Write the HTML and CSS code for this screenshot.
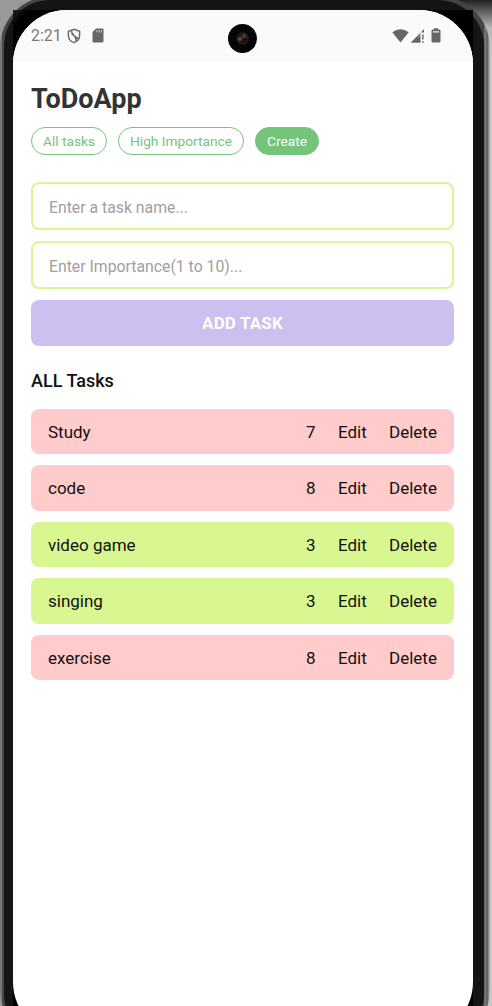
FILE: index.html
```html
<!DOCTYPE html>
<html lang="en">
<head>
<meta charset="utf-8">
<title>ToDoApp</title>
<link rel="stylesheet" href="styles.css">
</head>
<body>
<div class="phone">
<div class="bezel">
<div class="glass">
<div class="screen">
  <header class="status">
    <span class="time">2:21</span>
    <svg class="shield" width="14" height="16" viewBox="0 0 14 16" fill="none" stroke="#6c6c6c" stroke-width="1.5"><path d="M7 1.2 12.6 3.2V7.5C12.6 11 10.2 13.6 7 14.6 3.8 13.6 1.4 11 1.4 7.5V3.2ZM4.6 2.3C3.6 6.5 9.8 7.4 9.3 13.2M4.6 5.8 11.4 10.8"/></svg>
    <svg class="sd" width="12" height="15" viewBox="0 0 12 15"><path fill="#666" d="M4 .5H10.5Q11.5.5 11.5 1.5V13Q11.5 14.5 10 14.5H2Q.5 14.5.5 13V4Z"/><path stroke="#ccc" stroke-width="1" d="M5 2V4.5M7.2 2V4.5M9.4 2V4.5"/></svg>
    <span class="camera"></span>
    <svg class="wifi" width="17" height="14" viewBox="0 0 17 14"><path fill="#666" d="M.3 3.2Q8.5-2.8 16.7 3.2L8.5 13.6Z"/></svg>
    <svg class="signal" width="15" height="14" viewBox="0 0 15 14"><path fill="#666" d="M.5 13.7 14 .2V3.6H10.5V13.7ZM12.2 5.5H13.6V10.5H12.2ZM12.2 12H13.6V13.7H12.2Z"/><path fill="#fafafa" d="M7.5 8.5 12.8 3.2V4.5H10.3V6.5L8.3 8.5Z" opacity=".6"/></svg>
    <svg class="battery" width="10" height="15" viewBox="0 0 10 15"><path fill="#666" d="M3 .3H7V1.6H8.5Q9.5 1.6 9.5 2.6V13.5Q9.5 14.5 8.5 14.5H1.5Q.5 14.5.5 13.5V2.6Q.5 1.6 1.5 1.6H3Z"/><path fill="#eee" d="M2 3.2H8V4.4H2Z"/></svg>
  </header>
  <main class="app">
    <h1 class="title">ToDoApp</h1>
    <nav class="tabs"><span class="tab tab-all">All tasks</span><span class="tab tab-high">High Importance</span><span class="tab tab-create">Create</span></nav>
    <form class="form">
      <input class="field" placeholder="Enter a task name...">
      <input class="field" placeholder="Enter Importance(1 to 10)...">
      <button class="add" type="button">ADD TASK</button>
    </form>
    <h2 class="heading">ALL Tasks</h2>
    <ul class="list">
      <li class="task high"><span class="name">Study</span><span class="score">7</span><span class="edit">Edit</span><span class="delete">Delete</span></li>
      <li class="task high"><span class="name">code</span><span class="score">8</span><span class="edit">Edit</span><span class="delete">Delete</span></li>
      <li class="task low"><span class="name">video game</span><span class="score">3</span><span class="edit">Edit</span><span class="delete">Delete</span></li>
      <li class="task low"><span class="name">singing</span><span class="score">3</span><span class="edit">Edit</span><span class="delete">Delete</span></li>
      <li class="task high"><span class="name">exercise</span><span class="score">8</span><span class="edit">Edit</span><span class="delete">Delete</span></li>
    </ul>
  </main>
</div>
</div>
</div>
</div>
</body>
</html>
```
FILE: styles.css
```css
* { box-sizing: border-box; }
html, body { height: 100%; margin: 0; overflow: hidden; }
body { background: linear-gradient(90deg, #999 0 250px, transparent 250px), linear-gradient(#222 0, #b8b8b8 28px, #c8c8c8 60px); font-family: Roboto, sans-serif; }
.phone { width: 490px; height: 1046px; margin-top: -4px; padding: 4px 6px 0 4px; border-radius: 52px; background: linear-gradient(90deg, #777 0 2px, #4a4a4a 2px 4px, #444 4px 484px, #888 485px, #555 487px, #777 488px, #bbb 490px); }
.bezel { width: 480px; height: 1040px; padding: 10px 11px 0 9px; background: #141414; border-radius: 46px; }
.glass { height: 1026px; background: linear-gradient(135deg, #222 0, #000 12px, #000); }
.screen { height: 1026px; overflow: hidden; background: #fff; border-radius: 54px; }
.status { height: 51px; display: flex; align-items: center; padding: 0 32px 0 18px; background: #fafafa; color: #7a7a7a; }
.time { width: 36px; font-size: 16px; }
.shield { margin-right: 11px; }
.camera { width: 29px; height: 29px; margin: 5px 0 0 124px; border-radius: 50%; background: radial-gradient(circle at 16px 12px, #65304f 0 1px, transparent 3px), radial-gradient(circle at 12px 15px, #66501f 0 1px, transparent 3px), radial-gradient(circle, #17120f 0 4px, #202022 5px, #050505 7px); }
.wifi { margin-left: auto; margin-right: 1px; }
.signal { margin-right: 6px; }
.app { padding: 22px 19px 0 18px; }
.title { margin: 0; color: #333; font-size: 27px; line-height: 32px; font-weight: 700; }
.tabs { display: flex; gap: 11px; margin-top: 11.5px; }
.tab { height: 28.5px; border: 1px solid #74c47c; border-radius: 15px; color: #74c47c; font-size: 13.7px; line-height: 27.5px; text-align: center; }
.tab-all { width: 76px; }
.tab-high { width: 126px; }
.tab-create { width: 64px; background: #74c47c; color: #fff; }
.form { display: flex; flex-direction: column; gap: 11px; margin-top: 27px; }
.field { width: 100%; height: 48px; padding: 2px 16px 0; border: 2px solid #d8f793; border-radius: 8px; background: #fff; font: 15.8px Roboto, sans-serif; }
.field::placeholder { color: #a0a0a0; opacity: 1; }
.add { height: 45.5px; padding: 1px 0 0; border: 0; border-radius: 8px; background: #cbc0f0; color: #fff; font: 700 17px Roboto, sans-serif; letter-spacing: .15px; }
.heading { margin: 24px 0 17px; color: #111; font-size: 18px; line-height: 22px; font-weight: 500; }
.list { margin: 0; padding: 0; list-style: none; display: grid; gap: 11px; }
.task { height: 45.5px; padding: 1px 17px 0; display: flex; align-items: center; border-radius: 8px; color: #111; font-size: 17px; }
.high { background: #ffcbcb; }
.low { background: #d8f791; }
.name { flex: 1; }
.score { width: 32px; }
.edit { width: 51px; }
.delete { width: 48px; }
```
